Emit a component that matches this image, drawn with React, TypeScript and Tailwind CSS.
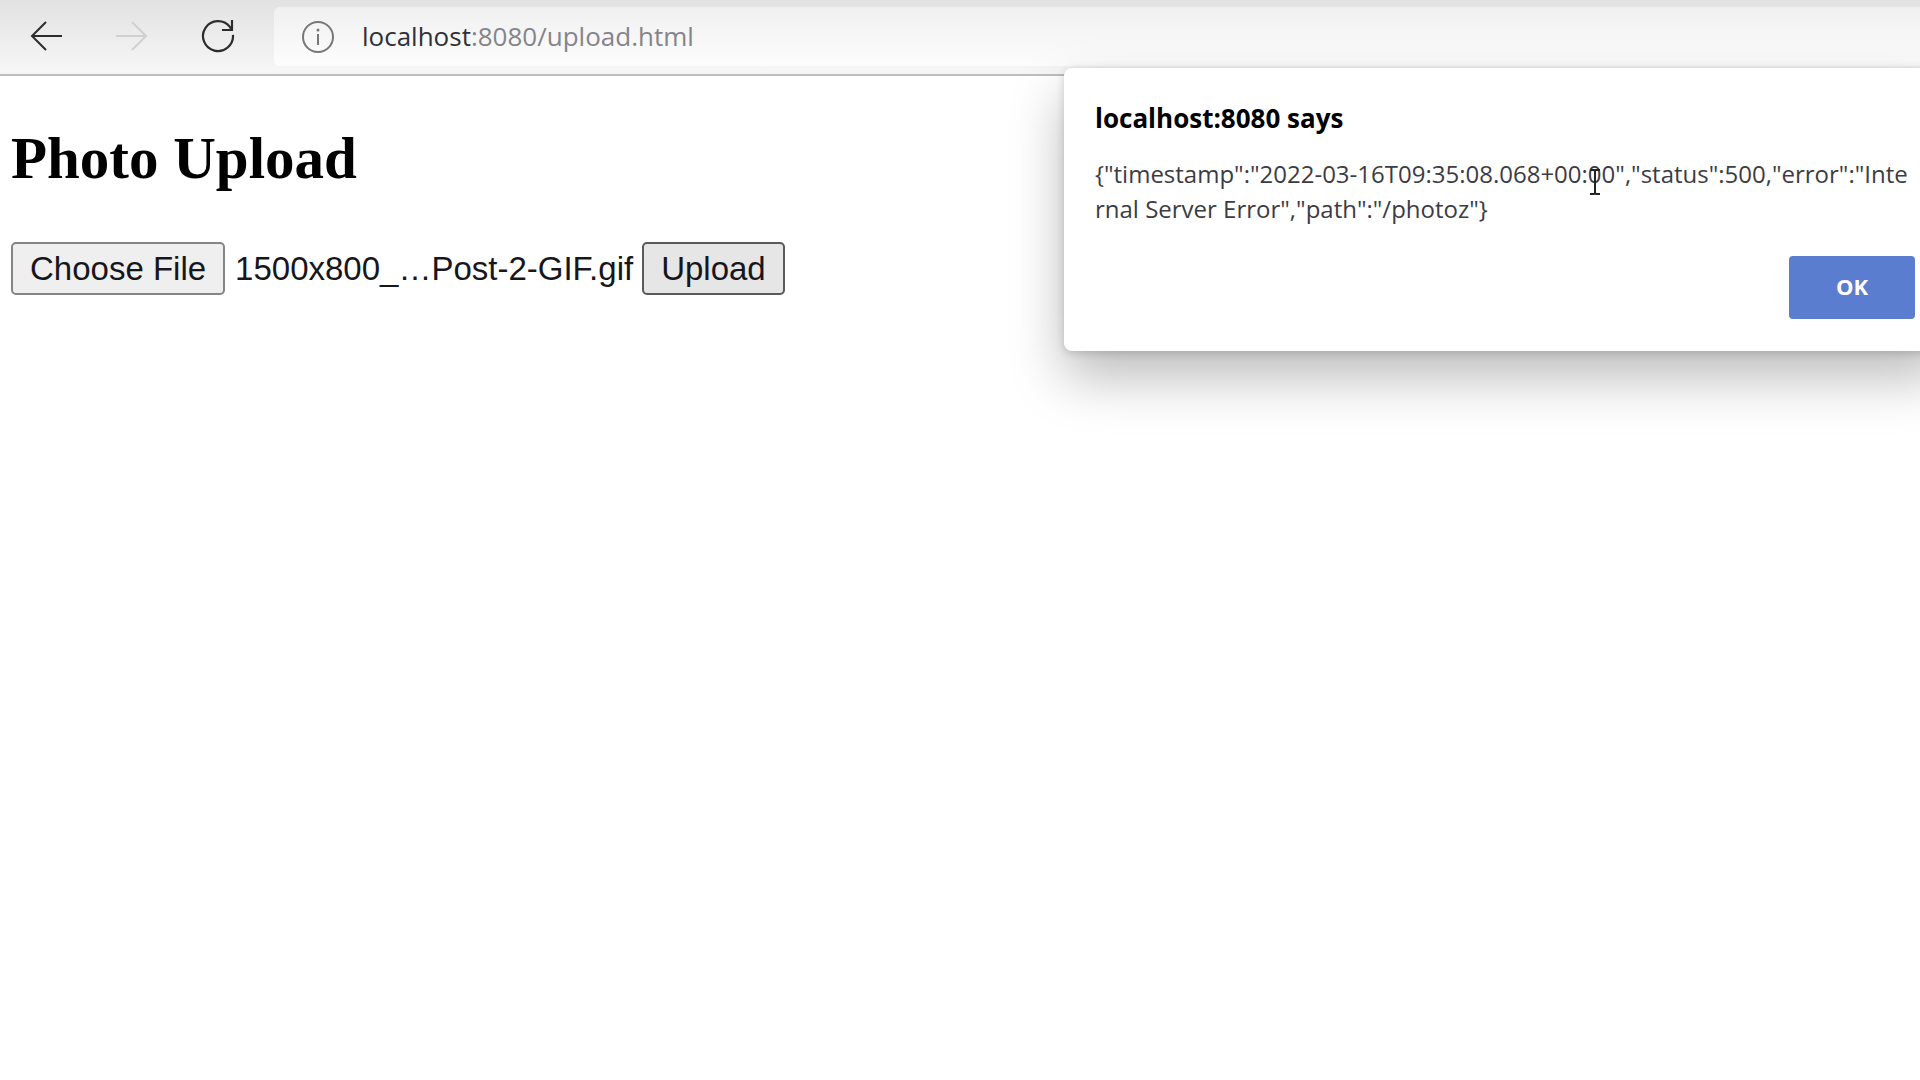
import { useRef, useState } from "react";

function BackIcon() {
  return (
    <svg width="34" height="34" viewBox="0 0 34 34" fill="none" stroke="#2c2c2c" strokeWidth="2" aria-hidden="true">
      <path d="M33 17H3M17 3L3 17l14 14" />
    </svg>
  );
}

function ForwardIcon() {
  return (
    <svg width="34" height="34" viewBox="0 0 34 34" fill="none" stroke="#d0d0d0" strokeWidth="2" aria-hidden="true">
      <path d="M1 17h30M17 3l14 14-14 14" />
    </svg>
  );
}

function ReloadIcon() {
  return (
    <svg width="34" height="34" viewBox="0 0 34 34" fill="none" stroke="#2c2c2c" strokeWidth="2.2" aria-hidden="true">
      <path d="M31.950 15.800A15 15 0 1 1 28.900 7.900L30.500 10.500" />
      <path d="M31 1v10h-10" />
    </svg>
  );
}

function InfoIcon() {
  return (
    <svg width="34" height="34" viewBox="0 0 34 34" fill="none" stroke="#777" strokeWidth="2" aria-hidden="true">
      <circle cx="17" cy="17" r="15" />
      <path d="M17 14v11" />
      <circle cx="17" cy="10" r="1.500" fill="#777" stroke="none" />
    </svg>
  );
}

function TextCursor() {
  return (
    <svg className="pointer-events-none absolute left-[524px] top-[100px]" width="14" height="28" viewBox="0 0 14 28" fill="none" stroke="#222" strokeWidth="2" aria-hidden="true">
      <path d="M2 2h4l1 1 1-1h4M2 26h4l1-1 1 1h4M7 3v22" />
    </svg>
  );
}

function Toolbar() {
  return (
    <header className="flex h-[76px] items-start border-b-2 border-[#bdbdbd] bg-linear-to-b from-[#e2e2e2] to-[#f7f7f7] pt-[7px] font-['Open_Sans',sans-serif]">
      <nav className="flex h-[58px] w-[274px] shrink-0 items-center gap-[52px] pl-[29px]">
        <button type="button" aria-label="Back"><BackIcon /></button>
        <button type="button" aria-label="Forward" disabled><ForwardIcon /></button>
        <button type="button" aria-label="Reload"><ReloadIcon /></button>
      </nav>
      <div className="flex h-[59px] grow items-center gap-[27px] rounded-l-md bg-linear-to-b from-[#f0f0f0] to-[#fdfdfd] pl-[27px]">
        <button type="button" aria-label="View site information"><InfoIcon /></button>
        <div className="pb-[2px] text-[26px] leading-[40px] text-[#84848c]">
          <span className="text-[#30303a]">localhost</span>:8080/upload.html
        </div>
      </div>
    </header>
  );
}

function AlertDialog({ onClose }: { onClose: () => void }) {
  return (
    <section
      role="alertdialog"
      aria-labelledby="alert-title"
      aria-describedby="alert-text"
      className="absolute -right-[26px] top-[68px] w-[882px] rounded-lg bg-white px-[31px] pb-[32px] pt-[30px] font-['Open_Sans',sans-serif] shadow-[0_26px_54px_rgba(0,0,0,0.27),0_2px_8px_rgba(0,0,0,0.16)]"
    >
      <h2 id="alert-title" className="text-[26px] font-bold leading-[40px] text-black">localhost:8080 says</h2>
      <p id="alert-text" className="mt-[18px] text-[24px] leading-[35px] text-[#3c3c44]">
        <span className="block whitespace-nowrap">{'{"timestamp":"2022-03-16T09:35:08.068+00:00","status":500,"error":"Inte'}</span>
        <span className="block whitespace-nowrap">{'rnal Server Error","path":"/photoz"}'}</span>
      </p>
      <div className="mt-[30px] flex justify-end">
        <button type="button" onClick={onClose} className="h-[63px] w-[126px] rounded-[4px] bg-[#5b7dcf] pb-[4px] text-[22px] font-bold leading-[36px] text-white">
          OK
        </button>
      </div>
      <TextCursor />
    </section>
  );
}

export default function App() {
  const picker = useRef<HTMLInputElement>(null);
  const [fileName, setFileName] = useState("1500x800_…Post-2-GIF.gif");
  const [alertOpen, setAlertOpen] = useState(true);

  return (
    <div className="relative min-h-screen overflow-hidden bg-white">
      <Toolbar />
      <main className="px-[11px] pt-[48px] text-black">
        <h1 className="font-['Liberation_Serif',serif] text-[59px] font-bold leading-[68px]">Photo Upload</h1>
        <form
          className="mt-[50px] flex items-center font-['Liberation_Sans',sans-serif] text-[33px] leading-[36px] text-[#16161c]"
          onSubmit={(event) => {
            event.preventDefault();
            setAlertOpen(true);
          }}
        >
          <input
            ref={picker}
            type="file"
            aria-label="Photo"
            className="hidden"
            onChange={(event) => setFileName(event.target.files?.[0]?.name ?? "No file chosen")}
          />
          <button type="button" onClick={() => picker.current?.click()} className="h-[53px] rounded-[5px] border-2 border-[#858585] bg-[#efefef] px-[17px]">
            Choose File
          </button>
          <output className="ml-[10px]">{fileName}</output>
          <button type="submit" className="ml-[9px] h-[53px] rounded-[5px] border-2 border-[#5a5a5a] bg-[#e6e6e6] px-[17px]">
            Upload
          </button>
        </form>
      </main>
      {alertOpen && <AlertDialog onClose={() => setAlertOpen(false)} />}
    </div>
  );
}
